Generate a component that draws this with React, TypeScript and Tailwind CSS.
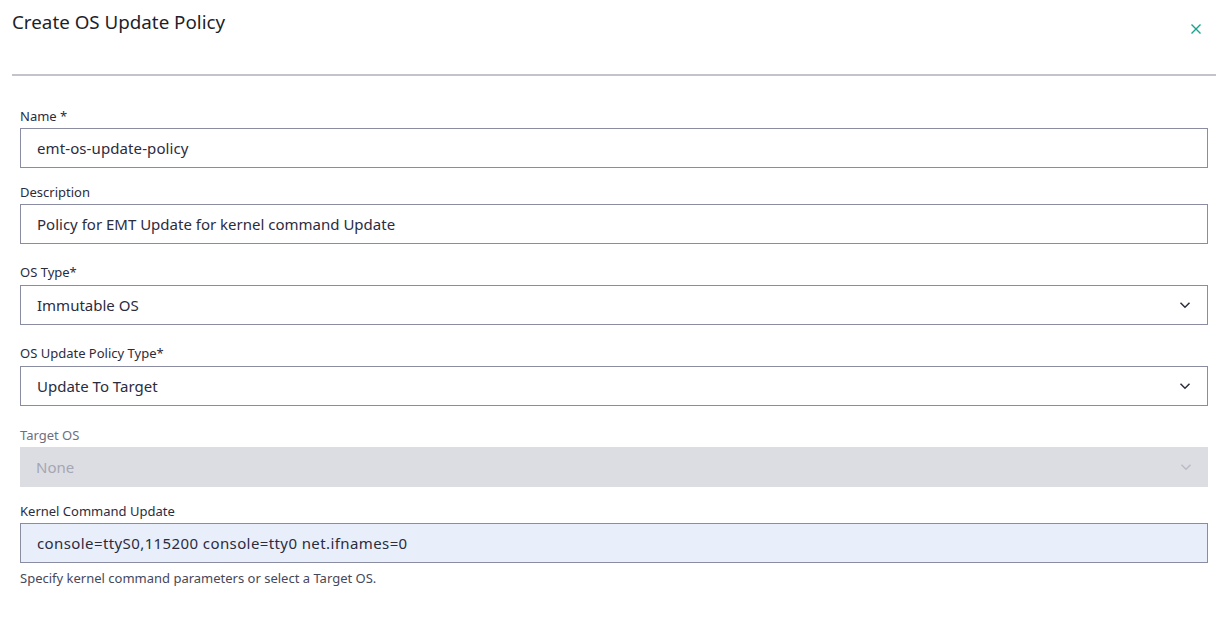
import React from "react";

const font = { fontFamily: '"Noto Sans", "Open Sans", sans-serif' };

function Chevron({ disabled }: { disabled?: boolean }) {
  return (
    <svg width="12" height="8" viewBox="0 0 12 8" className="shrink-0">
      <path
        d="M1.5 1.8 L6 6.2 L10.5 1.8"
        fill="none"
        stroke={disabled ? "#b9bbc6" : "#2b2c3e"}
        strokeWidth="1.5"
      />
    </svg>
  );
}

function Label({ children, className = "" }: { children: React.ReactNode; className?: string }) {
  return <div className={`text-[13px] leading-4 text-[#2b2c3e] ${className}`}>{children}</div>;
}

export default function App() {
  return (
    <div className="w-full h-[633px] bg-white text-[#2b2c3e]" style={font}>
      <div className="flex items-start justify-between pl-3 pr-[24px] pt-[8px] h-[74px]">
        <div className="text-[18.8px] leading-7 text-[#1e1f2a]">Create OS Update Policy</div>
        <svg width="10" height="10" viewBox="0 0 10 10" className="mt-[16px]">
          <path d="M0.5 0.5 L9.5 9.5 M9.5 0.5 L0.5 9.5" stroke="#16a28c" strokeWidth="1.4" />
        </svg>
      </div>
      <div className="ml-3 mr-[9px] h-[2px] bg-[#c3c3cc]" />
      <div className="pl-5 pr-[17px]">
        <Label className="mt-[32px]">Name *</Label>
        <div className="mt-[4px] h-10 border border-[#8a8da2] flex items-center px-4 pt-px text-[15px] tracking-[0.1px]">
          emt-os-update-policy
        </div>
        <Label className="mt-[16px]">Description</Label>
        <div className="mt-[4px] h-10 border border-[#8a8da2] flex items-center px-4 pt-px text-[15px]">
          Policy for EMT Update for kernel command Update
        </div>
        <Label className="mt-[20px]">OS Type*</Label>
        <div className="mt-[5px] h-10 border border-[#8a8da2] flex items-center justify-between pl-4 pr-[16px] text-[15px]">
          <span>Immutable OS</span>
          <Chevron />
        </div>
        <Label className="mt-[20px]">OS Update Policy Type*</Label>
        <div className="mt-[5px] h-10 border border-[#8a8da2] flex items-center justify-between pl-4 pr-[16px] text-[15px]">
          <span>Update To Target</span>
          <Chevron />
        </div>
        <Label className="mt-[21px] text-[#6d6f80]">Target OS</Label>
        <div className="mt-[4px] h-10 bg-[#dcdde2] flex items-center justify-between pl-4 pr-[16px] text-[15px] text-[#a4a6b4]">
          <span>None</span>
          <Chevron disabled />
        </div>
        <Label className="mt-[16px]">Kernel Command Update</Label>
        <div className="mt-[4px] h-10 border border-[#8a8da2] bg-[#e8effb] flex items-center px-4 pt-px text-[15px] tracking-[0.4px]">
          console=ttyS0,115200 console=tty0 net.ifnames=0
        </div>
        <div className="mt-[7px] text-[13px] leading-4 text-[#46485a]">
          Specify kernel command parameters or select a Target OS.
        </div>
      </div>
    </div>
  );
}
